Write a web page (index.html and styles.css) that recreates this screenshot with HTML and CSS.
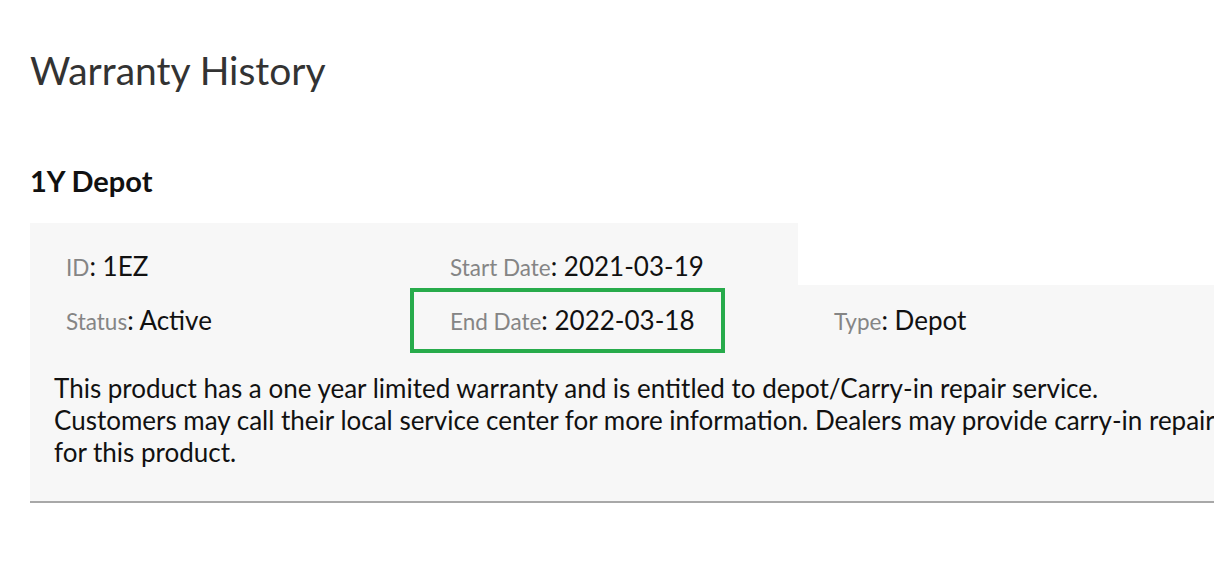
FILE: index.html
```html
<!DOCTYPE html>
<html lang="en">
<head>
<meta charset="utf-8">
<title>Warranty History</title>
<link rel="stylesheet" href="styles.css">
</head>
<body>
<main class="page">
  <h1 class="page-title">Warranty History</h1>
  <section class="warranty">
    <h2 class="warranty-name">1Y Depot</h2>
    <div class="warranty-card">
      <div class="row row-top">
        <div class="field"><span class="label">ID</span>: 1EZ</div>
        <div class="field"><span class="label">Start Date</span>: 2021-03-19</div>
      </div>
      <div class="card-body">
        <div class="row row-main">
          <div class="field"><span class="label">Status</span>: Active</div>
          <div class="field highlight"><span class="label">End Date</span>: 2022-03-18</div>
          <div class="field"><span class="label">Type</span>: Depot</div>
        </div>
        <p class="description">This product has a one year limited warranty and is entitled to depot/Carry-in repair service.<br>Customers may call their local service center for more information. Dealers may provide carry-in repair service<br>for this product.</p>
      </div>
    </div>
  </section>
</main>
</body>
</html>
```

FILE: styles.css
```css
html, body {
  margin: 0;
  padding: 0;
  overflow: hidden;
  background: #ffffff;
}

body {
  font-family: "Lato", "Open Sans", "Liberation Sans", sans-serif;
  color: #111111;
}

.page {
  padding-left: 30px;
}

.page-title {
  margin: 47px 0 0;
  font-size: 39px;
  line-height: 46px;
  font-weight: 400;
  color: #333333;
}

.warranty-name {
  margin: 71px 0 0;
  font-size: 29px;
  line-height: 34px;
  font-weight: 700;
  color: #111111;
}

.warranty-card {
  margin-top: 25px;
}

.row {
  display: grid;
  grid-template-columns: 384px 384px 384px;
}

.row-top {
  width: 768px;
  height: 62px;
  box-sizing: border-box;
  padding-top: 27px;
  grid-template-columns: 384px 384px;
  background: #f7f7f7;
}

.card-body {
  width: 1400px;
  background: #f7f7f7;
  border-bottom: 2px solid #a8a8a8;
  padding-top: 7px;
  padding-bottom: 33px;
}

.field {
  padding-left: 36px;
  font-size: 26px;
  line-height: 32px;
  color: #111111;
  white-space: nowrap;
}

.label {
  font-size: 22.5px;
  color: #858585;
}

.row-main .field {
  height: 57px;
  box-sizing: border-box;
  padding-top: 12px;
}

.row-main .highlight {
  width: 307px;
  outline: 4px solid #27ab4b;
}

.description {
  margin: 23px 0 0;
  padding-left: 24px;
  font-size: 26px;
  line-height: 32px;
  color: #111111;
  white-space: nowrap;
}
```
